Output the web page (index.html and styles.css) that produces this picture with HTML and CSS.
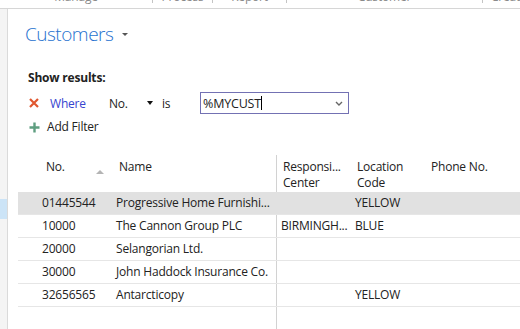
FILE: index.html
```html
<!DOCTYPE html>
<html lang="en">
<head>
    <meta charset="UTF-8">
    <title>Customers</title>
    <link rel="stylesheet" href="styles.css">
</head>
<body>
    <div class="topbar">
        <div class="tab tab-manage">Manage</div>
        <span class="sep"></span>
        <div class="tab tab-process">Process</div>
        <span class="sep"></span>
        <div class="tab tab-report">Report</div>
        <span class="sep"></span>
        <div class="tab tab-customer">Customer</div>
        <span class="sep"></span>
        <div class="tab tab-create">Create</div>
    </div>
    <div class="page">
        <div class="sidebar"><div class="mark"></div></div>
        <div class="content">
            <h1 class="title">Customers <span class="title-caret"></span></h1>

            <div class="filters">
                <div class="show">Show results:</div>
                <div class="filter-row">
                    <svg class="remove" width="10" height="10" viewBox="0 0 10 10">
                        <path d="M1 1 L9 9 M9 1 L1 9" stroke="#e0572f" stroke-width="2.2" fill="none"/>
                    </svg>
                    <span class="where">Where</span>
                    <span class="field">No.</span>
                    <span class="field-caret"><span></span></span>
                    <span class="op">is</span>
                    <div class="value">
                        <span class="value-text">%MYCUST</span><span class="cursor"></span>
                        <svg class="chev" width="8" height="5" viewBox="0 0 8 5">
                            <path d="M1 1 L4 4 L7 1" stroke="#666" stroke-width="1.4" fill="none"/>
                        </svg>
                    </div>
                </div>
                <div class="add-row">
                    <svg class="plus" width="11" height="11" viewBox="0 0 11 11">
                        <path d="M5.5 0.5 V10.5 M0.5 5.5 H10.5" stroke="#5e9e80" stroke-width="2.4" fill="none"/>
                    </svg>
                    <span>Add Filter</span>
                </div>
            </div>

            <div class="grid">
                <div class="row head">
                    <div class="cell c-no">No. <span class="sort"></span></div>
                    <div class="cell c-name">Name</div>
                    <div class="cell c-resp">Responsi...<br>Center</div>
                    <div class="cell c-loc">Location<br>Code</div>
                    <div class="cell c-phone">Phone No.</div>
                </div>
                <div class="row selected">
                    <div class="cell c-no">01445544</div>
                    <div class="cell c-name">Progressive Home Furnishi...</div>
                    <div class="cell c-resp"></div>
                    <div class="cell c-loc">YELLOW</div>
                    <div class="cell c-phone"></div>
                </div>
                <div class="row">
                    <div class="cell c-no">10000</div>
                    <div class="cell c-name">The Cannon Group PLC</div>
                    <div class="cell c-resp">BIRMINGH...</div>
                    <div class="cell c-loc">BLUE</div>
                    <div class="cell c-phone"></div>
                </div>
                <div class="row">
                    <div class="cell c-no">20000</div>
                    <div class="cell c-name">Selangorian Ltd.</div>
                    <div class="cell c-resp"></div>
                    <div class="cell c-loc"></div>
                    <div class="cell c-phone"></div>
                </div>
                <div class="row">
                    <div class="cell c-no">30000</div>
                    <div class="cell c-name">John Haddock Insurance Co.</div>
                    <div class="cell c-resp"></div>
                    <div class="cell c-loc"></div>
                    <div class="cell c-phone"></div>
                </div>
                <div class="row">
                    <div class="cell c-no">32656565</div>
                    <div class="cell c-name">Antarcticopy</div>
                    <div class="cell c-resp"></div>
                    <div class="cell c-loc">YELLOW</div>
                    <div class="cell c-phone"></div>
                </div>
            </div>
        </div>
    </div>
</body>
</html>
```

FILE: styles.css
```css
body {
    margin: 0;
    font-family: "Open Sans", "Noto Sans", sans-serif;
    font-size: 12px;
    letter-spacing: -0.2px;
    color: #222;
    background: #fff;
    height: 329px;
    overflow: hidden;
}
.topbar {
    display: flex;
    height: 8px;
    border-bottom: 1px solid #d6d6d6;
    overflow: hidden;
}
.tab {
    text-align: center;
    color: #8a8a8a;
    line-height: 14px;
    margin-top: -10px;
    flex: none;
}
.tab-manage { width: 152px; }
.tab-process { width: 59px; }
.tab-report { width: 73px; }
.tab-customer { width: 195px; }
.tab-create { width: 60px; text-align: left; padding-left: 8px; }
.sep {
    flex: none;
    width: 1px;
    height: 3px;
    background: #c4c4c4;
}
.page {
    display: flex;
    height: 320px;
}
.sidebar {
    width: 7px;
    background: #f4f4f4;
    border-right: 1px solid #dadada;
    padding-top: 190px;
}
.mark {
    height: 20px;
    background: #cce4f7;
}
.content {
    flex: 1;
    display: flex;
    flex-direction: column;
}
.title {
    margin: 12px 0 0 17px;
    font-size: 19px;
    font-weight: 300;
    letter-spacing: -0.5px;
    line-height: 26px;
    color: #1f72cf;
    display: flex;
    align-items: center;
}
.title-caret {
    margin-left: 9px;
    border-left: 3px solid transparent;
    border-right: 3px solid transparent;
    border-top: 3px solid #555;
}
.filters {
    padding-left: 20px;
    margin-top: 23px;
}
.show {
    font-weight: bold;
    line-height: 16px;
}
.filter-row {
    display: flex;
    align-items: center;
    margin-top: 6px;
    padding-left: 1px;
    height: 22px;
}
.remove {
    margin-right: 11px;
}
.where {
    color: #3644cf;
    width: 59px;
}
.field {
    width: 38px;
}
.field-caret {
    width: 15px;
}
.field-caret span {
    display: block;
    width: 0;
    border-left: 3px solid transparent;
    border-right: 3px solid transparent;
    border-top: 4px solid #111;
}
.op {
    width: 38px;
}
.value {
    width: 145px;
    height: 20px;
    border: 1px solid #7371b3;
    display: flex;
    align-items: center;
    padding-left: 2px;
    box-sizing: content-box;
}
.value-text {
    font-size: 12.5px;
}
.cursor {
    width: 1px;
    height: 14px;
    background: #000;
}
.chev {
    margin-left: auto;
    margin-right: 5px;
}
.add-row {
    display: flex;
    align-items: center;
    line-height: 16px;
    margin-top: 5px;
    padding-left: 1px;
}
.plus {
    margin-right: 7px;
}
.grid {
    flex: 1;
    margin-top: 20px;
    margin-left: 10px;
    background: linear-gradient(#d2d2d2, #d2d2d2) no-repeat 258px 0 / 1px 100%;
}
.row {
    display: grid;
    grid-template-columns: 92px 166px 74px 74px 1fr;
    height: 22px;
    line-height: 22px;
    border-bottom: 1px solid #e6e6e6;
    white-space: nowrap;
}
.row.head {
    height: 37px;
    line-height: 16px;
    border-bottom: none;
}
.row.selected {
    background: #e1e1e1;
}
.cell {
    overflow: hidden;
}
.c-no { padding-left: 24px; }
.c-name { padding-left: 6px; }
.c-resp { padding-left: 5px; }
.c-loc { padding-left: 5px; }
.c-phone { padding-left: 7px; }
.head .cell {
    padding-top: 4px;
}
.head .c-no {
    padding-left: 28px;
    display: flex;
}
.head .c-name { padding-left: 9px; }
.head .c-resp { padding-left: 7px; }
.head .c-loc { padding-left: 7px; }
.sort {
    margin: 11px 6px 0 auto;
    width: 0;
    height: 0;
    border-left: 4px solid transparent;
    border-right: 4px solid transparent;
    border-bottom: 4px solid #b4b4b4;
}
```
